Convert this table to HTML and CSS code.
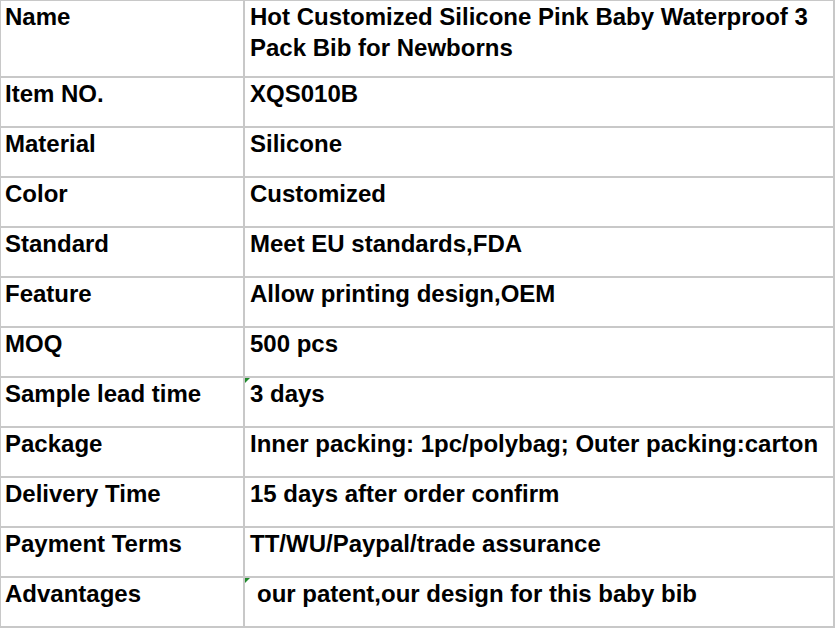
FILE: index.html
```html
<!DOCTYPE html>
<html>
<head>
<meta charset="utf-8">
<link rel="stylesheet" href="styles.css">
</head>
<body>
<div class="sheet">
  <div class="cell key first">Name</div>
  <div class="cell val first">Hot Customized Silicone Pink Baby Waterproof 3 Pack Bib for Newborns</div>
  <div class="cell key">Item NO.</div>
  <div class="cell val">XQS010B</div>
  <div class="cell key">Material</div>
  <div class="cell val">Silicone</div>
  <div class="cell key">Color</div>
  <div class="cell val">Customized</div>
  <div class="cell key">Standard</div>
  <div class="cell val">Meet EU standards,FDA</div>
  <div class="cell key">Feature</div>
  <div class="cell val">Allow printing design,OEM</div>
  <div class="cell key">MOQ</div>
  <div class="cell val">500 pcs</div>
  <div class="cell key">Sample lead time</div>
  <div class="cell val flag">3 days</div>
  <div class="cell key">Package</div>
  <div class="cell val">Inner packing: 1pc/polybag; Outer packing:carton</div>
  <div class="cell key">Delivery Time</div>
  <div class="cell val">15 days after order confirm</div>
  <div class="cell key">Payment Terms</div>
  <div class="cell val">TT/WU/Paypal/trade assurance</div>
  <div class="cell key">Advantages</div>
  <div class="cell val flag indent">our patent,our design for this baby bib</div>
</div>
</body>
</html>
```
FILE: styles.css
```css
html, body {
  margin: 0;
  padding: 0;
  background: #ffffff;
}
.sheet {
  display: grid;
  grid-template-columns: 244px 590px;
  border-top: 1px solid #c8c8c8;
  border-left: 1px solid #c8c8c8;
  width: 834px;
  font-family: "Liberation Sans", Arial, sans-serif;
  font-weight: bold;
  font-size: 24px;
  line-height: 31px;
  color: #000;
}
.cell {
  box-sizing: border-box;
  height: 50px;
  border-right: 2px solid #c8c8c8;
  border-bottom: 2px solid #c8c8c8;
  padding-top: 0;
  overflow: hidden;
  white-space: nowrap;
}
.cell.first {
  height: 77px;
  white-space: normal;
}
.key {
  padding-left: 4px;
}
.val {
  padding-left: 5px;
  padding-right: 4px;
}
.flag {
  position: relative;
}
.flag::before {
  content: "";
  position: absolute;
  left: 0;
  top: 0;
  width: 0;
  height: 0;
  border-top: 5px solid #1f8a2a;
  border-right: 5px solid transparent;
}
.indent {
  padding-left: 12px;
}
```
